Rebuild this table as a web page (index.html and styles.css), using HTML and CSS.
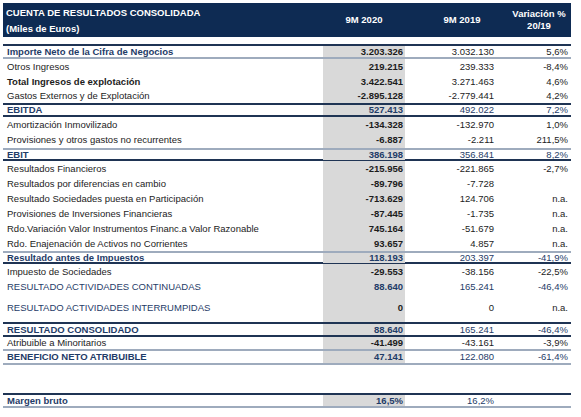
FILE: index.html
```html
<!DOCTYPE html>
<html lang="es">

<head>
    <meta charset="UTF-8">
    <meta name="viewport" content="width=device-width, initial-scale=1.0">
    <title>Cuenta de resultados consolidada</title>
    <link rel="stylesheet" href="styles.css">
</head>

<body>
    <div class="sheet">
        <div class="head">
            <div class="head-title">CUENTA DE RESULTADOS CONSOLIDADA<br>(Miles de Euros)</div>
            <div class="head-col c1">9M 2020</div>
            <div class="head-col c2">9M 2019</div>
            <div class="head-col c3">Variación %<br>20/19</div>
        </div>

        <div class="body">
            <div class="row h15 navy top-dark bottom-light"><span class="label b">Importe Neto de la Cifra de Negocios</span><span class="v1 ink">3.203.326</span><span class="v2 ink">3.032.130</span><span class="v3 ink">5,6%</span></div>
            <div class="row h15"><span class="label">Otros Ingresos</span><span class="v1">219.215</span><span class="v2">239.333</span><span class="v3">-8,4%</span></div>
            <div class="row h15"><span class="label b">Total Ingresos de explotación</span><span class="v1">3.422.541</span><span class="v2">3.271.463</span><span class="v3">4,6%</span></div>
            <div class="row h14"><span class="label">Gastos Externos y de Explotación</span><span class="v1">-2.895.128</span><span class="v2">-2.779.441</span><span class="v3">4,2%</span></div>
            <div class="row h14 navy top-dark bottom-dark"><span class="label b">EBITDA</span><span class="v1">527.413</span><span class="v2">492.022</span><span class="v3">7,2%</span></div>
            <div class="row h15"><span class="label">Amortización Inmovilizado</span><span class="v1">-134.328</span><span class="v2">-132.970</span><span class="v3">1,0%</span></div>
            <div class="row h16"><span class="label">Provisiones y otros gastos no recurrentes</span><span class="v1">-6.887</span><span class="v2">-2.211</span><span class="v3">211,5%</span></div>
            <div class="row h13 navy top-light bottom-dark"><span class="label b">EBIT</span><span class="v1">386.198</span><span class="v2">356.841</span><span class="v3">8,2%</span></div>
            <div class="row h15"><span class="label">Resultados Financieros</span><span class="v1">-215.956</span><span class="v2">-221.865</span><span class="v3">-2,7%</span></div>
            <div class="row h15"><span class="label">Resultados por diferencias en cambio</span><span class="v1">-89.796</span><span class="v2">-7.728</span><span class="v3"></span></div>
            <div class="row h15"><span class="label">Resultado Sociedades puesta en Participación</span><span class="v1">-713.629</span><span class="v2">124.706</span><span class="v3">n.a.</span></div>
            <div class="row h15"><span class="label">Provisiones de Inversiones Financieras</span><span class="v1">-87.445</span><span class="v2">-1.735</span><span class="v3">n.a.</span></div>
            <div class="row h15"><span class="label">Rdo.Variación Valor Instrumentos Financ.a Valor Razonable</span><span class="v1">745.164</span><span class="v2">-51.679</span><span class="v3">n.a.</span></div>
            <div class="row h15"><span class="label">Rdo. Enajenación de Activos no Corrientes</span><span class="v1">93.657</span><span class="v2">4.857</span><span class="v3">n.a.</span></div>
            <div class="row h13 navy top-light bottom-dark"><span class="label b">Resultado antes de Impuestos</span><span class="v1">118.193</span><span class="v2">203.397</span><span class="v3">-41,9%</span></div>
            <div class="row h15"><span class="label">Impuesto de Sociedades</span><span class="v1">-29.553</span><span class="v2">-38.156</span><span class="v3">-22,5%</span></div>
            <div class="row h15 navy"><span class="label">RESULTADO ACTIVIDADES CONTINUADAS</span><span class="v1">88.640</span><span class="v2">165.241</span><span class="v3">-46,4%</span></div>
            <div class="row h28 navy"><span class="label">RESULTADO ACTIVIDADES INTERRUMPIDAS</span><span class="v1 ink">0</span><span class="v2 ink">0</span><span class="v3 ink">n.a.</span></div>
            <div class="row h15 navy top-dark bottom-dark"><span class="label b">RESULTADO CONSOLIDADO</span><span class="v1">88.640</span><span class="v2">165.241</span><span class="v3">-46,4%</span></div>
            <div class="row h14 bottom-light"><span class="label">Atribuible a Minoritarios</span><span class="v1">-41.499</span><span class="v2">-43.161</span><span class="v3">-3,9%</span></div>
            <div class="row h14 navy bottom-light"><span class="label b">BENEFICIO NETO ATRIBUIBLE</span><span class="v1">47.141</span><span class="v2">122.080</span><span class="v3">-61,4%</span></div>
        </div>

        <div class="foot">
            <div class="row h15 navy top-dark bottom-light"><span class="label b">Margen bruto</span><span class="v1">16,5%</span><span class="v2">16,2%</span><span class="v3"></span></div>
        </div>
    </div>
</body>

</html>
```

FILE: styles.css
```css
/* hoja de resultados */
body {
    margin: 0;
    font-family: "Liberation Sans", Arial, sans-serif;
    font-size: 9.5px;
    color: #1c1c1c;
    background: #fff;
}

.sheet {
    width: 568px;
    padding: 3px 0 0 3px;
}

/* cabecera azul */
.head {
    display: grid;
    grid-template-columns: 320px 82px 89px 77px;
    height: 34px;
    background: #0e2b53;
    color: #fff;
    font-weight: bold;
}

.head-title {
    padding: 2px 0 0 3px;
    line-height: 16px;
}

.head-col {
    display: flex;
    align-items: center;
    justify-content: center;
    text-align: center;
    line-height: 12px;
}

.head-col.c2 {
    padding-left: 25px;
}

.head-col.c3 {
    padding-left: 13px;
}

.body {
    margin-top: 7px;
}

.foot {
    margin-top: 28px;
}

/* filas */
.row {
    display: grid;
    grid-template-columns: 320px 82px 89px 77px;
    box-sizing: border-box;
}

.row > span {
    display: flex;
    align-items: center;
    height: 100%;
    line-height: 10px;
    white-space: nowrap;
}

.h13 { height: 13px; }
.h14 { height: 14px; }
.h15 { height: 15px; }
.h16 { height: 16px; }
.h28 { height: 28px; }

.label {
    padding-left: 4px;
}

.b {
    font-weight: bold;
}

.v1,
.v2,
.v3 {
    justify-content: flex-end;
}

.v1 {
    background: #d9d9d9;
    font-weight: bold;
    padding-right: 2px;
}

.v3 {
    padding-right: 3px;
}

.navy {
    color: #1f3c68;
}

.navy .ink {
    color: #1c1c1c;
}

.top-dark {
    border-top: 2px solid #1f3454;
}

.top-light {
    border-top: 2px solid #9eabbd;
}

.bottom-dark {
    border-bottom: 2px solid #1f3454;
}

.bottom-light {
    border-bottom: 2px solid #9eabbd;
}
```
